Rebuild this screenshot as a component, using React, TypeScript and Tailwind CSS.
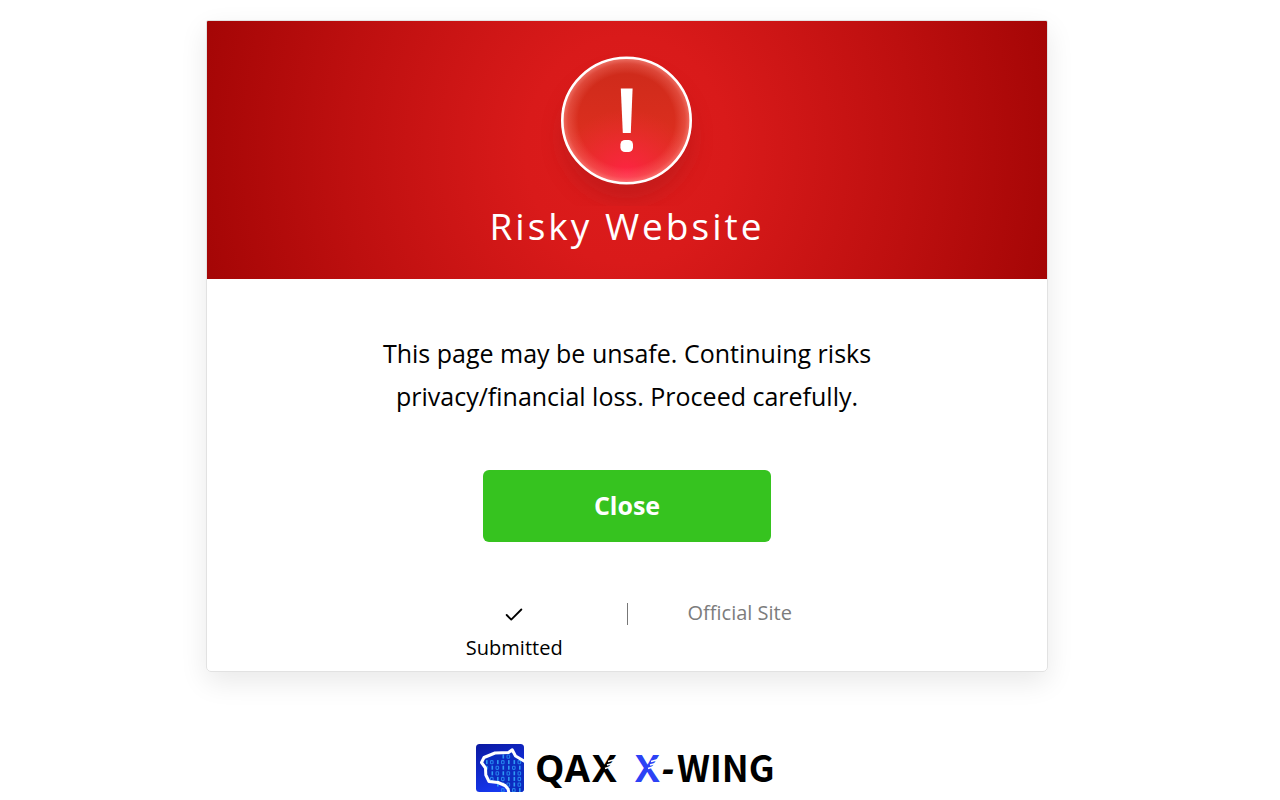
import React from 'react';
import { Check } from 'lucide-react';

const BITS = ['   10', '1010110', '0101101', ' 101010', ' 010110', '  11010', '   0101'];

function AlertBadge() {
  return (
    <svg className="block h-[160px] w-[172px]" viewBox="0 0 172 160" aria-hidden="true">
      <defs>
        <linearGradient id="badge-fill" x1="0" y1="0" x2="0" y2="1">
          <stop offset="0" stopColor="#cc2a1a" />
          <stop offset="0.55" stopColor="#da2e1e" />
          <stop offset="1" stopColor="#e82c28" />
        </linearGradient>
        <radialGradient id="badge-glow" cx="0.5" cy="0.93" r="0.52">
          <stop offset="0" stopColor="#ff2344" />
          <stop offset="0.4" stopColor="#f6283a" stopOpacity="0.7" />
          <stop offset="1" stopColor="#ef2c30" stopOpacity="0" />
        </radialGradient>
        <radialGradient id="badge-rim" cx="0.5" cy="0.5" r="0.5">
          <stop offset="0.74" stopColor="#ff8c82" stopOpacity="0" />
          <stop offset="0.9" stopColor="#ff8c82" stopOpacity="0.3" />
          <stop offset="1" stopColor="#ff9c94" stopOpacity="0.7" />
        </radialGradient>
        <filter id="badge-shadow" x="-30%" y="-30%" width="160%" height="160%">
          <feGaussianBlur stdDeviation="11" />
        </filter>
      </defs>
      <ellipse cx="86" cy="91" rx="64" ry="62" fill="#a51a1a" opacity="0.45" filter="url(#badge-shadow)" />
      <ellipse cx="85.5" cy="74.5" rx="65" ry="63" fill="url(#badge-fill)" />
      <ellipse cx="85.5" cy="74.5" rx="65" ry="63" fill="url(#badge-glow)" />
      <ellipse cx="85.5" cy="74.5" rx="65" ry="63" fill="url(#badge-rim)" />
      <ellipse cx="85.5" cy="74.5" rx="64.2" ry="62.7" fill="none" stroke="#fff" strokeWidth="2.6" />
      <path d="M79.8 42.5h11.8l-1.8 44.5h-8z" fill="#fff" />
      <rect x="79.4" y="94" width="12.6" height="12" rx="4.6" fill="#fff" />
    </svg>
  );
}

function BrandLogo() {
  return (
    <svg className="block h-[56px] w-[302px]" viewBox="0 -4 302 56" role="img" aria-label="QAX X-WING">
      <defs>
        <linearGradient id="brand-bg" x1="0" y1="0" x2="0.4" y2="1">
          <stop offset="0" stopColor="#0a18a0" />
          <stop offset="1" stopColor="#1638f0" />
        </linearGradient>
        <clipPath id="brand-clip">
          <rect width="48" height="48" rx="3.5" />
        </clipPath>
      </defs>
      <g clipPath="url(#brand-clip)">
        <rect width="48" height="48" fill="url(#brand-bg)" />
        <path
          d="M48 17L39 12 36.5 5.5 32 8 18 9 8 14.5 5 18.5 9 25 10 31 13 37.5 22 38.5 29 42 33 48H48z"
          fill="#0c2cc0"
        />
        {BITS.map((row, r) =>
          row.split('').map((bit, c) =>
            bit === ' ' ? null : bit === '1' ? (
              <rect key={`${r}-${c}`} x={10 + c * 5.5} y={10.5 + r * 5.6} width="1.6" height="4" fill="#2f98f4" />
            ) : (
              <rect
                key={`${r}-${c}`}
                x={9 + c * 5.5}
                y={11 + r * 5.6}
                width="2.6"
                height="3.2"
                rx="0.8"
                fill="none"
                stroke="#2480ec"
                strokeWidth="1.1"
              />
            )
          )
        )}
        <path
          d="M49 17.5L39.5 12 36.2 5.8 32.5 8.5 19 9 8 13.5 5.5 18.5 9.5 24 9.8 31 13 37.5 22 38.5 29 41.5 32 45 33 49"
          fill="none"
          stroke="#fff"
          strokeWidth="3"
          strokeLinejoin="round"
        />
      </g>
      <g className="font-['Open_Sans',sans-serif] text-[37px] font-bold">
        <text x="59" y="38">QA</text>
        <text x="116" y="38">X</text>
        <text x="159" y="38" fill="#2c42f5">X</text>
        <text x="186" y="38" className="italic">-</text>
        <text x="201" y="38" className="font-['Noto_Sans_CJK_SC',sans-serif] text-[36px]">WING</text>
      </g>
      {/* feather cuts in both X letters */}
      <g stroke="#fff" strokeWidth="1.4">
        <path d="M132 17.5l11-3M131 21l11-3M129 24.5l9-3" />
        <path d="M175 17.5l11-3M174 21l11-3M172 24.5l9-3" />
      </g>
    </svg>
  );
}

export default function App() {
  return (
    <div className="flex flex-col items-center bg-white pt-[20px] pr-[26px] font-['Open_Sans',sans-serif] text-black">
      <main className="w-full max-w-[842px] overflow-hidden rounded-t-[2px] rounded-b-[5px] border border-[#e2e2e2] shadow-[0_10px_28px_rgba(0,0,0,0.09)]">
        <header className="flex flex-col items-center bg-[radial-gradient(ellipse_55%_200%_at_50%_50%,#dd1c1c_0%,#d91a1a_22%,#bd0f0f_62%,#a00404_100%)] pt-[25px] pb-[27px]">
          <AlertBadge />
          <h1 className="-mt-[7px] text-[37px] leading-[53px] tracking-[3px] text-white">Risky Website</h1>
        </header>

        <section className="flex flex-col items-center px-6 pt-[53px] pb-[6px]">
          <p className="max-w-[500px] text-center text-[25px] leading-[43px]">
            This page may be unsafe. Continuing risks privacy/financial loss. Proceed carefully.
          </p>
          <button
            type="button"
            className="mt-[52px] h-[72px] w-full max-w-[288px] cursor-pointer rounded-[6px] bg-[#36c31f] text-[25px] font-bold text-white"
          >
            Close
          </button>

          <div className="mt-[53px] flex w-full max-w-[450px] items-start text-[20px] leading-[35px]">
            <div className="flex flex-1 flex-col items-center">
              <span className="flex h-[35px] items-center pt-1">
                <Check className="size-[22px]" strokeWidth={2} />
              </span>
              <span>Submitted</span>
            </div>
            <span className="mt-2 h-[22px] w-px bg-[#777]" />
            <div className="flex-1 text-center">
              <a href="#" className="text-[#7c7c7c]">Official Site</a>
            </div>
          </div>
        </section>
      </main>

      <footer className="mt-[68px]">
        <BrandLogo />
      </footer>
    </div>
  );
}
